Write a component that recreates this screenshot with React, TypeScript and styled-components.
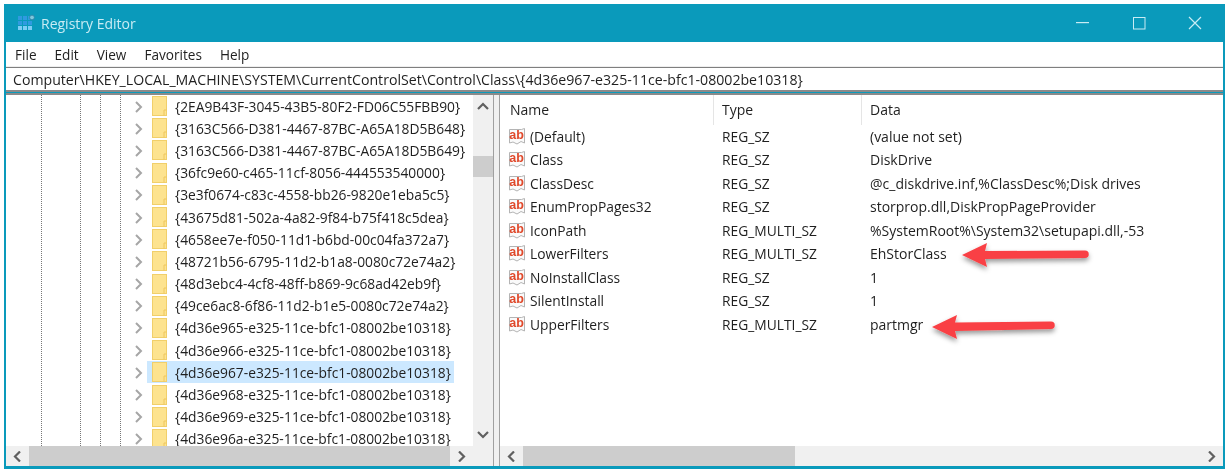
import React from "react";
import styled, { createGlobalStyle } from "styled-components";

const GlobalStyle = createGlobalStyle`
  html, body { margin: 0; padding: 0; background: #ffffff; }
  body { font-family: "Open Sans", "Noto Sans", sans-serif; color: #1f1f1f; }
`;

const Page = styled.div`
  position: relative;
  width: 1228px;
  height: 471px;
  padding: 4px 3px 2px 4px;
  box-sizing: border-box;
  overflow: hidden;
  filter: blur(0.35px);
`;

const Win = styled.div`
  height: 100%;
  display: flex;
  flex-direction: column;
  background: #0a9abb;
  padding: 0 2px 3px 2px;
  box-sizing: border-box;
`;

const TitleBar = styled.div`
  flex: 0 0 38px;
  display: flex;
  align-items: center;
  padding-left: 11px;
  color: #c9ecf4;
  font-size: 14px;
`;

const TitleText = styled.span`
  margin-left: 6px;
  flex: 1;
`;

const WinButton = styled.div`
  width: 56px;
  height: 38px;
  display: flex;
  align-items: center;
  justify-content: center;
`;

const MenuBar = styled.div`
  flex: 0 0 24px;
  display: flex;
  align-items: center;
  gap: 18px;
  padding-left: 9px;
  background: #ffffff;
  border-bottom: 1px solid #eeeeee;
  font-size: 13.6px;
`;

const AddressBar = styled.div`
  flex: 0 0 22px;
  display: flex;
  align-items: center;
  padding-left: 7px;
  background: #ffffff;
  border-top: 1px solid #7f7f7f;
  border-bottom: 2px solid #8a8a8a;
  font-size: 14.15px;
  white-space: nowrap;
`;

const Panes = styled.div`
  flex: 1;
  min-height: 0;
  display: flex;
  margin-top: 1px;
  background: #ffffff;
  border-top: 2px solid #8a8a8a;
`;

const LeftPane = styled.div`
  flex: 0 0 487px;
  min-width: 0;
  display: flex;
  flex-direction: column;
`;

const Splitter = styled.div`
  flex: 0 0 7px;
  box-sizing: border-box;
  background: #f0f0f0;
  border-left: 1px solid #a0a0a0;
  border-right: 1px solid #a0a0a0;
`;

const RightPane = styled.div`
  flex: 1;
  min-width: 0;
  display: flex;
  flex-direction: column;
`;

const PaneBody = styled.div`
  flex: 1;
  min-height: 0;
  display: flex;
`;

const TreeList = styled.div`
  position: relative;
  flex: 1;
  min-width: 0;
  overflow: hidden;
  padding-left: 141px;
`;

const Guide = styled.div<{ $x: number }>`
  position: absolute;
  left: ${(p) => p.$x}px;
  top: 0;
  bottom: 0;
  border-left: 1px dotted #777777;
`;

const TreeRow = styled.div<{ $selected?: boolean }>`
  height: 22.2px;
  display: flex;
  align-items: center;
  font-size: 13.8px;
  white-space: nowrap;
  background: ${(p) => (p.$selected ? "#cce8ff" : "transparent")};
  margin-right: 19px;
  padding-left: 5px;
  gap: 8px;
`;

const Expander = styled.svg`
  position: absolute;
  left: 128px;
  margin-top: 1px;
`;

const FolderIcon = styled.svg`
  flex: 0 0 15px;
`;

const KeyName = styled.span`
  flex-shrink: 0;
`;

const VScroll = styled.div`
  flex: 0 0 20px;
  background: #f0f0f0;
  display: flex;
  flex-direction: column;
  align-items: center;
  justify-content: space-between;
  padding: 7px 0;
  position: relative;
`;

const VThumb = styled.div`
  position: absolute;
  left: 0;
  right: 0;
  top: 61px;
  height: 21px;
  background: #cdcdcd;
`;

const HScroll = styled.div`
  flex: 0 0 20px;
  display: flex;
  align-items: center;
  background: #f0f0f0;
`;

const ScrollEnd = styled.div`
  flex: 0 0 23px;
  display: flex;
  justify-content: center;
`;

const HThumb = styled.div<{ $w?: number }>`
  height: 100%;
  background: #cdcdcd;
  ${(p) => (p.$w ? `width: ${p.$w}px;` : "flex: 1;")}
`;

const Fill = styled.div`
  flex: 1;
`;

const Corner = styled.div`
  flex: 0 0 20px;
  height: 100%;
  background: #f0f0f0;
`;

const Grid = styled.div`
  flex: 1;
  min-height: 0;
  padding-left: 2px;
  overflow: hidden;
`;

const HeaderRow = styled.div`
  display: grid;
  grid-template-columns: 212px 148px 1fr;
  height: 29.5px;
  font-size: 14px;
`;

const HeaderCell = styled.div`
  display: flex;
  align-items: center;
  padding-left: 8px;
  border-right: 1px solid #e5e5e5;
  &:last-child { border-right: none; }
`;

const ValueRow = styled.div`
  display: grid;
  grid-template-columns: 212px 148px 1fr;
  height: 23.5px;
  align-items: center;
  font-size: 13.8px;
  white-space: nowrap;
`;

const NameCell = styled.div`
  display: flex;
  align-items: center;
  gap: 3px;
  padding-left: 6px;
`;

const TypeCell = styled.div`
  padding-left: 8px;
`;

const DataCell = styled.div`
  padding-left: 8px;
  font-size: 14px;
`;

const Arrow = styled.svg`
  position: absolute;
  left: 0;
  top: 0;
  pointer-events: none;
`;

const RegIcon = () => (
  <svg width="19" height="19" viewBox="0 0 19 19">
    <path d="M1.5 2.5H13.5L16.5 1.5V16L13 14.5L9 17L5 15L1.5 16Z" fill="#fafafa" stroke="#b4b4b4" />
    <text x="1.2" y="12" fontFamily="Liberation Sans, sans-serif" fontSize="12.5" fontWeight="700" fill="#e0492b">ab</text>
  </svg>
);

const Folder = () => (
  <FolderIcon width="15" height="20" viewBox="0 0 15 20">
    <rect x="0.5" y="0.5" width="14" height="19" fill="#fde38f" stroke="#f1cf6a" />
    <path d="M12 19.5V14H14.5" fill="none" stroke="#eec65e" />
  </FolderIcon>
);

const Chevron = ({ dir }: { dir: "up" | "down" | "left" | "right" }) => {
  const d = { up: "M1 7L6 2L11 7", down: "M1 2L6 7L11 2", left: "M7 0.5L2 5.5L7 10.5", right: "M2 0.5L7 5.5L2 10.5" }[dir];
  const vertical = dir === "up" || dir === "down";
  return (
    <svg width={vertical ? 12 : 9} height={vertical ? 9 : 11} viewBox={vertical ? "0 0 12 9" : "0 0 9 11"}>
      <path d={d} fill="none" stroke="#606060" strokeWidth="2.2" />
    </svg>
  );
};

const keys = [
  "{2EA9B43F-3045-43B5-80F2-FD06C55FBB90}",
  "{3163C566-D381-4467-87BC-A65A18D5B648}",
  "{3163C566-D381-4467-87BC-A65A18D5B649}",
  "{36fc9e60-c465-11cf-8056-444553540000}",
  "{3e3f0674-c83c-4558-bb26-9820e1eba5c5}",
  "{43675d81-502a-4a82-9f84-b75f418c5dea}",
  "{4658ee7e-f050-11d1-b6bd-00c04fa372a7}",
  "{48721b56-6795-11d2-b1a8-0080c72e74a2}",
  "{48d3ebc4-4cf8-48ff-b869-9c68ad42eb9f}",
  "{49ce6ac8-6f86-11d2-b1e5-0080c72e74a2}",
  "{4d36e965-e325-11ce-bfc1-08002be10318}",
  "{4d36e966-e325-11ce-bfc1-08002be10318}",
  "{4d36e967-e325-11ce-bfc1-08002be10318}",
  "{4d36e968-e325-11ce-bfc1-08002be10318}",
  "{4d36e969-e325-11ce-bfc1-08002be10318}",
  "{4d36e96a-e325-11ce-bfc1-08002be10318}",
];

const values = [
  ["(Default)", "REG_SZ", "(value not set)"],
  ["Class", "REG_SZ", "DiskDrive"],
  ["ClassDesc", "REG_SZ", "@c_diskdrive.inf,%ClassDesc%;Disk drives"],
  ["EnumPropPages32", "REG_SZ", "storprop.dll,DiskPropPageProvider"],
  ["IconPath", "REG_MULTI_SZ", "%SystemRoot%\\System32\\setupapi.dll,-53"],
  ["LowerFilters", "REG_MULTI_SZ", "EhStorClass"],
  ["NoInstallClass", "REG_SZ", "1"],
  ["SilentInstall", "REG_SZ", "1"],
  ["UpperFilters", "REG_MULTI_SZ", "partmgr"],
];

const guides = [35, 74, 94, 114];

export default function App() {
  return (
    <Page>
      <GlobalStyle />
      <Win>
        <TitleBar>
          <svg width="18" height="18" viewBox="0 0 18 18">
            <g>
              {[1, 6, 11].map((y) =>
                [1, 6, 11].map((x) => <rect key={`${x}-${y}`} x={x} y={y + 1} width="4" height="4" fill={y === 11 ? "#7ccdf5" : "#2f9ae0"} />)
              )}
            </g>
            <circle cx="15" cy="3.5" r="2.4" fill="#7fc7dc" stroke="#2b86a8" />
          </svg>
          <TitleText>Registry Editor</TitleText>
          <WinButton>
            <svg width="14" height="2"><rect width="13" height="1.2" fill="#c9ecf4" /></svg>
          </WinButton>
          <WinButton>
            <svg width="13" height="13"><rect x="0.5" y="0.5" width="11.5" height="11.5" fill="none" stroke="#c9ecf4" /></svg>
          </WinButton>
          <WinButton>
            <svg width="14" height="14"><path d="M1 1L13 13M13 1L1 13" stroke="#c9ecf4" strokeWidth="1.2" /></svg>
          </WinButton>
        </TitleBar>
        <MenuBar>
          <span>File</span>
          <span>Edit</span>
          <span>View</span>
          <span>Favorites</span>
          <span>Help</span>
        </MenuBar>
        <AddressBar>Computer\HKEY_LOCAL_MACHINE\SYSTEM\CurrentControlSet\Control\Class\{"{"}4d36e967-e325-11ce-bfc1-08002be10318{"}"}</AddressBar>
        <Panes>
          <LeftPane>
            <PaneBody>
              <TreeList>
                {guides.map((x) => (
                  <Guide key={x} $x={x} />
                ))}
                {keys.map((k, i) => (
                  <TreeRow key={k} $selected={i === 12}>
                    <Expander width="9" height="12" viewBox="0 0 9 12">
                      <path d="M2 1L7 6L2 11" fill="none" stroke="#a6a6a6" strokeWidth="2" />
                    </Expander>
                    <Folder />
                    <KeyName>{k}</KeyName>
                  </TreeRow>
                ))}
              </TreeList>
              <VScroll>
                <Chevron dir="up" />
                <VThumb />
                <Chevron dir="down" />
              </VScroll>
            </PaneBody>
            <HScroll>
              <ScrollEnd><Chevron dir="left" /></ScrollEnd>
              <HThumb />
              <ScrollEnd><Chevron dir="right" /></ScrollEnd>
              <Corner />
            </HScroll>
          </LeftPane>
          <Splitter />
          <RightPane>
            <Grid>
              <HeaderRow>
                <HeaderCell>Name</HeaderCell>
                <HeaderCell>Type</HeaderCell>
                <HeaderCell>Data</HeaderCell>
              </HeaderRow>
              {values.map(([name, type, data]) => (
                <ValueRow key={name}>
                  <NameCell>
                    <RegIcon />
                    {name}
                  </NameCell>
                  <TypeCell>{type}</TypeCell>
                  <DataCell>{data}</DataCell>
                </ValueRow>
              ))}
            </Grid>
            <HScroll>
              <ScrollEnd><Chevron dir="left" /></ScrollEnd>
              <HThumb $w={272} />
              <Fill />
              <ScrollEnd><Chevron dir="right" /></ScrollEnd>
            </HScroll>
          </RightPane>
        </Panes>
      </Win>
      <Arrow width="1228" height="471" viewBox="0 0 1228 471">
        <defs>
          <filter id="arrowShadow" x="-20%" y="-50%" width="140%" height="220%">
            <feDropShadow dx="0" dy="3" stdDeviation="2.5" floodColor="#000000" floodOpacity="0.4" />
          </filter>
        </defs>
        <g fill="#f94144" filter="url(#arrowShadow)">
          <path d="M962 255L987 243L985 251L1085 250.5A3.5 3.5 0 0 1 1085 258L985 259L987 267Z" />
          <path d="M932 327L957 315L955 322.5L1051 321.5A3.5 3.5 0 0 1 1051 329L955 331L957 339Z" />
        </g>
      </Arrow>
    </Page>
  );
}
